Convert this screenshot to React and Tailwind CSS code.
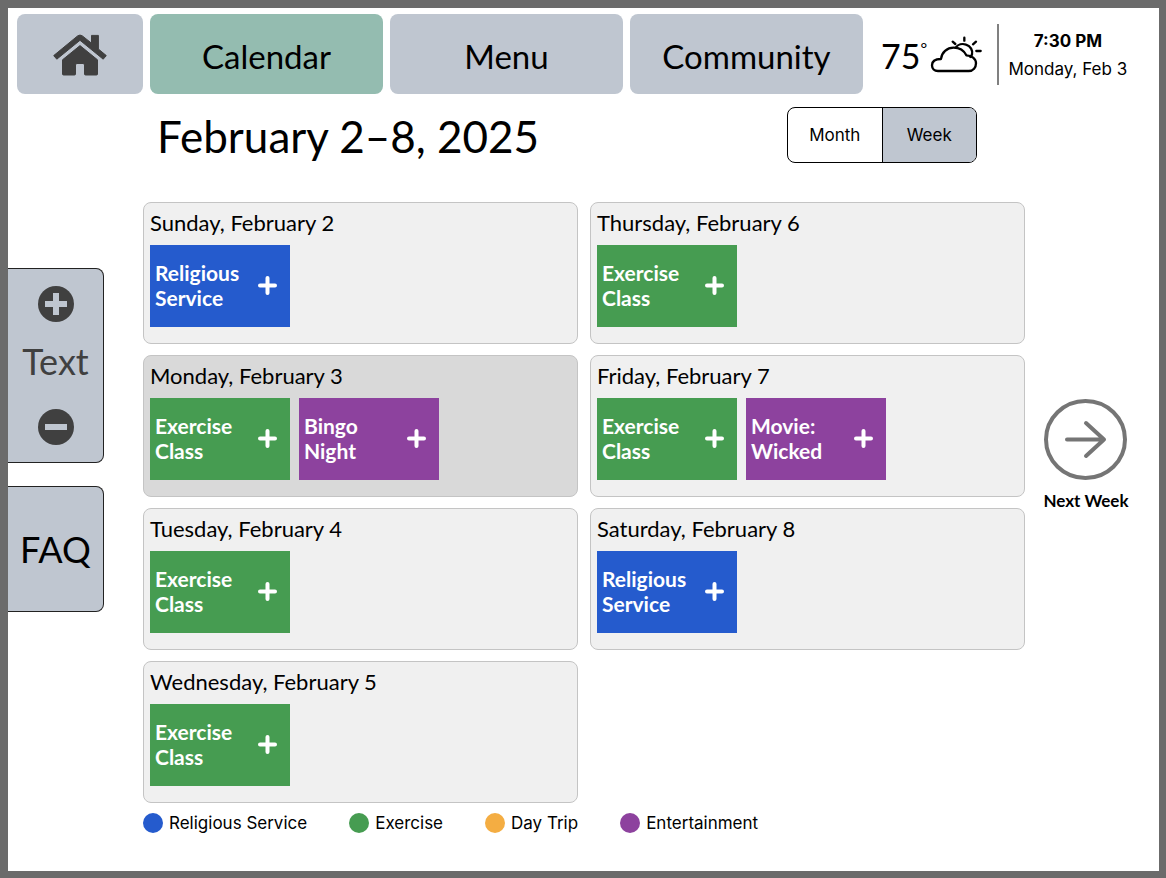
import { useState } from "react";
import clsx from "clsx";

const days = [
    { name: "Sunday, February 2", events: [{ lines: ["Religious", "Service"], type: "religious" }] },
    {
        name: "Monday, February 3",
        today: true,
        events: [
            { lines: ["Exercise", "Class"], type: "exercise" },
            { lines: ["Bingo", "Night"], type: "entertainment" },
        ],
    },
    { name: "Tuesday, February 4", events: [{ lines: ["Exercise", "Class"], type: "exercise" }] },
    { name: "Wednesday, February 5", events: [{ lines: ["Exercise", "Class"], type: "exercise" }] },
    { name: "Thursday, February 6", events: [{ lines: ["Exercise", "Class"], type: "exercise" }] },
    {
        name: "Friday, February 7",
        events: [
            { lines: ["Exercise", "Class"], type: "exercise" },
            { lines: ["Movie:", "Wicked"], type: "entertainment" },
        ],
    },
    { name: "Saturday, February 8", events: [{ lines: ["Religious", "Service"], type: "religious" }] },
];

const colors = {
    religious: "bg-[#255bcd]",
    exercise: "bg-[#469c51]",
    trip: "bg-[#f4ad42]",
    entertainment: "bg-[#8d429e]",
};

const legend = [
    { label: "Religious Service", type: "religious" },
    { label: "Exercise", type: "exercise" },
    { label: "Day Trip", type: "trip" },
    { label: "Entertainment", type: "entertainment" },
];

function HomeIcon() {
    return (
        <svg viewBox="53 34 54 42" className="w-[54px] h-[42px]" fill="#404040" stroke="#404040" strokeWidth="1" strokeLinejoin="round" aria-hidden="true">
            <path d="M53.7 55.6 77.6 35.9Q80 34.2 82.4 35.9L91.5 43.2V35.4H98.4V49L106.3 55.6 103.2 59.2 80 40.3 56.8 59.2Z" />
            <path d="M80 45.6 97.5 59.8V74q0 1-1 1H85.500q-1 0-1-1V65q0-1.500-1.500-1.500H77q-1.500 0-1.500 1.500V74q0 1-1 1H63.500q-1 0-1-1V59.800Z" />
        </svg>
    );
}

function WeatherIcon() {
    return (
        <svg viewBox="480 105 156 111" className="w-[52px] h-[37px]" fill="none" stroke="black" strokeWidth="7" strokeLinecap="round" strokeLinejoin="round" aria-hidden="true">
            <path d="M504 210H596C610 210 618 199 618 187 618 173 605 163 589 163 582 149 568 140 551 140 531 140 515 154 513 174 496 174 486 181 486 193 486 203 493 210 504 210Z" />
            <path d="M557 140C564 130 577 127 588 131 602 135 609 149 606 160 605 164 603 166 601 168" />
            <path d="M583 110V119M548 122 556 129M618 122 609 130M619 150H632" />
        </svg>
    );
}

function PlusIcon() {
    return (
        <svg viewBox="0 0 19 19" className="w-[19px] h-[19px] shrink-0" stroke="white" strokeWidth="4" strokeLinecap="round" aria-hidden="true">
            <path d="M9.500 2V17M2 9.500H17" />
        </svg>
    );
}

function SizeIcon({ plus }) {
    return (
        <svg viewBox="0 0 36 36" className="w-9 h-9" aria-hidden="true">
            <circle cx="18" cy="18" r="18" fill="#404040" />
            <path d={plus ? "M18 10V26M10 18H26" : "M10 18H26"} stroke="#bfc6d0" strokeWidth="6" strokeLinecap="square" strokeLinejoin="round" />
        </svg>
    );
}

function Tab({ label, active }) {
    return (
        <button className={clsx("flex-1 h-20 pt-1.5 rounded-lg text-[33px]", active ? "bg-[#94bcb0]" : "bg-[#bfc6d0]")}>
            {label}
        </button>
    );
}

function DayCard({ day }) {
    return (
        <section className={clsx("h-[142px] px-1.5 pt-1.5 rounded-lg border border-[#c4c4c4]", day.today ? "bg-[#d9d9d9]" : "bg-[#f0f0f0]")}>
            <h2 className="text-[22px] leading-7 whitespace-nowrap">{day.name}</h2>
            <div className="flex gap-[9px] mt-2">
                {day.events.map((event) => (
                    <button
                        key={event.lines[0]}
                        className={clsx("flex items-center justify-between w-[140px] h-[82px] pl-[5px] pr-[13px] pb-0.5 text-left text-white font-bold text-[21px] leading-[25px]", colors[event.type])}
                    >
                        <span>
                            {event.lines[0]}
                            <br />
                            {event.lines[1]}
                        </span>
                        <PlusIcon />
                    </button>
                ))}
            </div>
        </section>
    );
}

export default function App() {
    const [view, setView] = useState("Week");

    return (
        <div className="min-h-screen bg-white text-black border-8 border-r-[7px] border-b-[7px] border-[#6b6b6b] font-['Lato',sans-serif]">
            {/* Top navigation */}
            <header className="flex items-center pl-[9px] pt-1.5">
                <nav className="flex flex-1 gap-[7px]">
                    <button aria-label="Home" className="flex items-center justify-center pt-0.5 w-[126px] h-20 rounded-lg bg-[#bfc6d0]">
                        <HomeIcon />
                    </button>
                    <Tab label="Calendar" active />
                    <Tab label="Menu" />
                    <Tab label="Community" />
                </nav>
                <div className="flex items-center w-[296px] pl-[18px]">
                    <div className="flex items-center">
                        <span className="pt-1 text-[34px] leading-10">75</span>
                        <span className="self-start w-2.5 text-base leading-8">°</span>
                        <WeatherIcon />
                    </div>
                    <div className="ml-[15px] pl-[9px] pt-0.5 border-l-2 border-[#808080] h-[61px] flex flex-col justify-center text-center text-[17px] font-['Inter',sans-serif] whitespace-nowrap">
                        <span className="font-bold leading-7">7:30 PM</span>
                        <span className="leading-7">Monday, Feb 3</span>
                    </div>
                </div>
            </header>

            {/* Week title and view switch */}
            <div className="flex items-start justify-between pl-[149px] pr-[182px] pt-[13px]">
                <h1 className="text-[44px] leading-[58px] whitespace-nowrap">February 2–8, 2025</h1>
                <div className="flex w-[190px] h-14 mb-1 rounded-lg border border-black overflow-hidden text-[17px] font-['Inter',sans-serif]">
                    {["Month", "Week"].map((name) => (
                        <button
                            key={name}
                            onClick={() => setView(name)}
                            className={clsx("flex-1 pt-0.5 first:border-r border-black", view === name && "bg-[#bfc6d0]")}
                        >
                            {name}
                        </button>
                    ))}
                </div>
            </div>

            <div className="flex pt-[35px]">
                {/* Text size and FAQ */}
                <aside className="w-24 shrink-0 pt-[66px] flex flex-col gap-[23px]">
                    <div className="h-[195px] py-[17px] flex flex-col items-center justify-between rounded-r-lg border border-l-0 border-[#222] bg-[#bfc6d0]">
                        <button aria-label="Increase text size">
                            <SizeIcon plus />
                        </button>
                        <span className="pb-2.5 text-[36px] leading-10 text-[#404040]">Text</span>
                        <button aria-label="Decrease text size">
                            <SizeIcon />
                        </button>
                    </div>
                    <button className="h-[126px] rounded-r-lg border border-l-0 border-[#222] bg-[#bfc6d0] text-[36px]">FAQ</button>
                </aside>

                <main className="flex-1 ml-[39px]">
                    <div className="grid grid-flow-col grid-rows-4 auto-cols-fr gap-x-3 gap-y-[11px]">
                        {days.map((day) => (
                            <DayCard key={day.name} day={day} />
                        ))}
                    </div>
                    <ul className="flex gap-[42px] mt-2 text-[17px] leading-6 font-['Inter',sans-serif]">
                        {legend.map((item) => (
                            <li key={item.type} className="flex items-center gap-1.5">
                                <span className={clsx("w-5 h-5 rounded-full", colors[item.type])} />
                                {item.label}
                            </li>
                        ))}
                    </ul>
                </main>

                <div className="w-[134px] shrink-0 pt-[197px] pr-3 flex flex-col items-center">
                    <button className="flex flex-col items-center gap-2 font-bold text-[17px] whitespace-nowrap">
                        <svg viewBox="0 0 83 81" className="w-[83px] h-[81px]" fill="none" stroke="#757575" strokeWidth="4" strokeLinecap="round" strokeLinejoin="round" aria-hidden="true">
                            <ellipse cx="41.500" cy="40.500" rx="39.500" ry="38.500" />
                            <path d="M23 40.500H60M42 24 60 40.500 42 57" />
                        </svg>
                        Next Week
                    </button>
                </div>
            </div>
        </div>
    );
}
